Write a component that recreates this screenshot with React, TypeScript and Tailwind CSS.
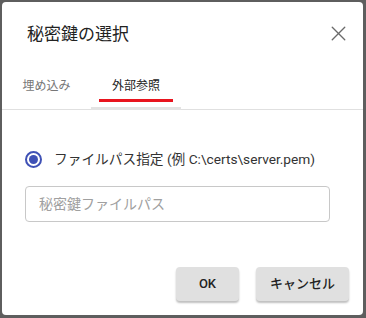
import { X } from 'lucide-react'

const FONT = "font-['Roboto','Noto_Sans_CJK_JP',sans-serif]"

export default function App() {
  return (
    <div className={`h-[318px] w-[366px] bg-[#5e5e5e] pl-[2px] pt-[2px] ${FONT}`}>
      <div className="flex h-[313px] w-[361px] flex-col rounded-[4px] bg-white">
        {/* header */}
        <div className="mt-[19px] flex h-[26px] items-center justify-between pl-[25px] pr-[12px]">
          <h2 className="text-[17px] leading-[24px] text-[#222]">秘密鍵の選択</h2>
          <X className="-mt-[2px] h-[25px] w-[25px] text-[#6a6a6a]" strokeWidth={1.3} />
        </div>

        {/* tabs */}
        <div className="mt-[27px] flex border-b border-[#e0e0e0]">
          <button type="button" className="w-[89px] pb-[14px] pt-[3px] text-[12px] leading-[18px] text-[#777]">
            埋め込み
          </button>
          <button type="button" className="relative w-[90px] pb-[14px] pt-[3px] text-[12px] leading-[18px] text-[#222]">
            外部参照
            <span className="absolute bottom-[7px] left-[8px] h-[3px] w-[74px] bg-[#e8141e]" />
            <span className="absolute -bottom-[1px] left-0 h-[3px] w-[90px] bg-[#e3e3e3]" />
          </button>
        </div>

        {/* body */}
        <div className="px-[23px] pt-[39px]">
          <label className="flex items-center gap-[12px]">
            <span className="flex h-[17px] w-[17px] items-center justify-center rounded-full border-2 border-[#3f51b5]">
              <span className="h-[9px] w-[9px] rounded-full bg-[#3f51b5]" />
            </span>
            <span className="text-[13.7px] leading-[20px] text-[#333]">ファイルパス指定 (例 C:\certs\server.pem)</span>
          </label>
          <input
            placeholder="秘密鍵ファイルパス"
            className="mt-[17px] h-[36px] w-[305px] rounded-[4px] border border-[#c8c8c8] px-[13px] text-[14px] text-[#333] outline-none placeholder:text-[#a0a0a0]"
          />
        </div>

        {/* actions */}
        <div className="mt-auto flex justify-end gap-[17px] pb-[14px] pr-[14px]">
          <button type="button" className="h-[34px] w-[63px] rounded-[4px] bg-[#e0e0e0] text-[13px] font-medium text-[#222] shadow-[0_2px_2px_rgba(0,0,0,0.25)]">
            OK
          </button>
          <button type="button" className="h-[34px] w-[93px] rounded-[4px] bg-[#e0e0e0] text-[13px] font-medium text-[#222] shadow-[0_2px_2px_rgba(0,0,0,0.25)]">
            キャンセル
          </button>
        </div>
      </div>
    </div>
  )
}
